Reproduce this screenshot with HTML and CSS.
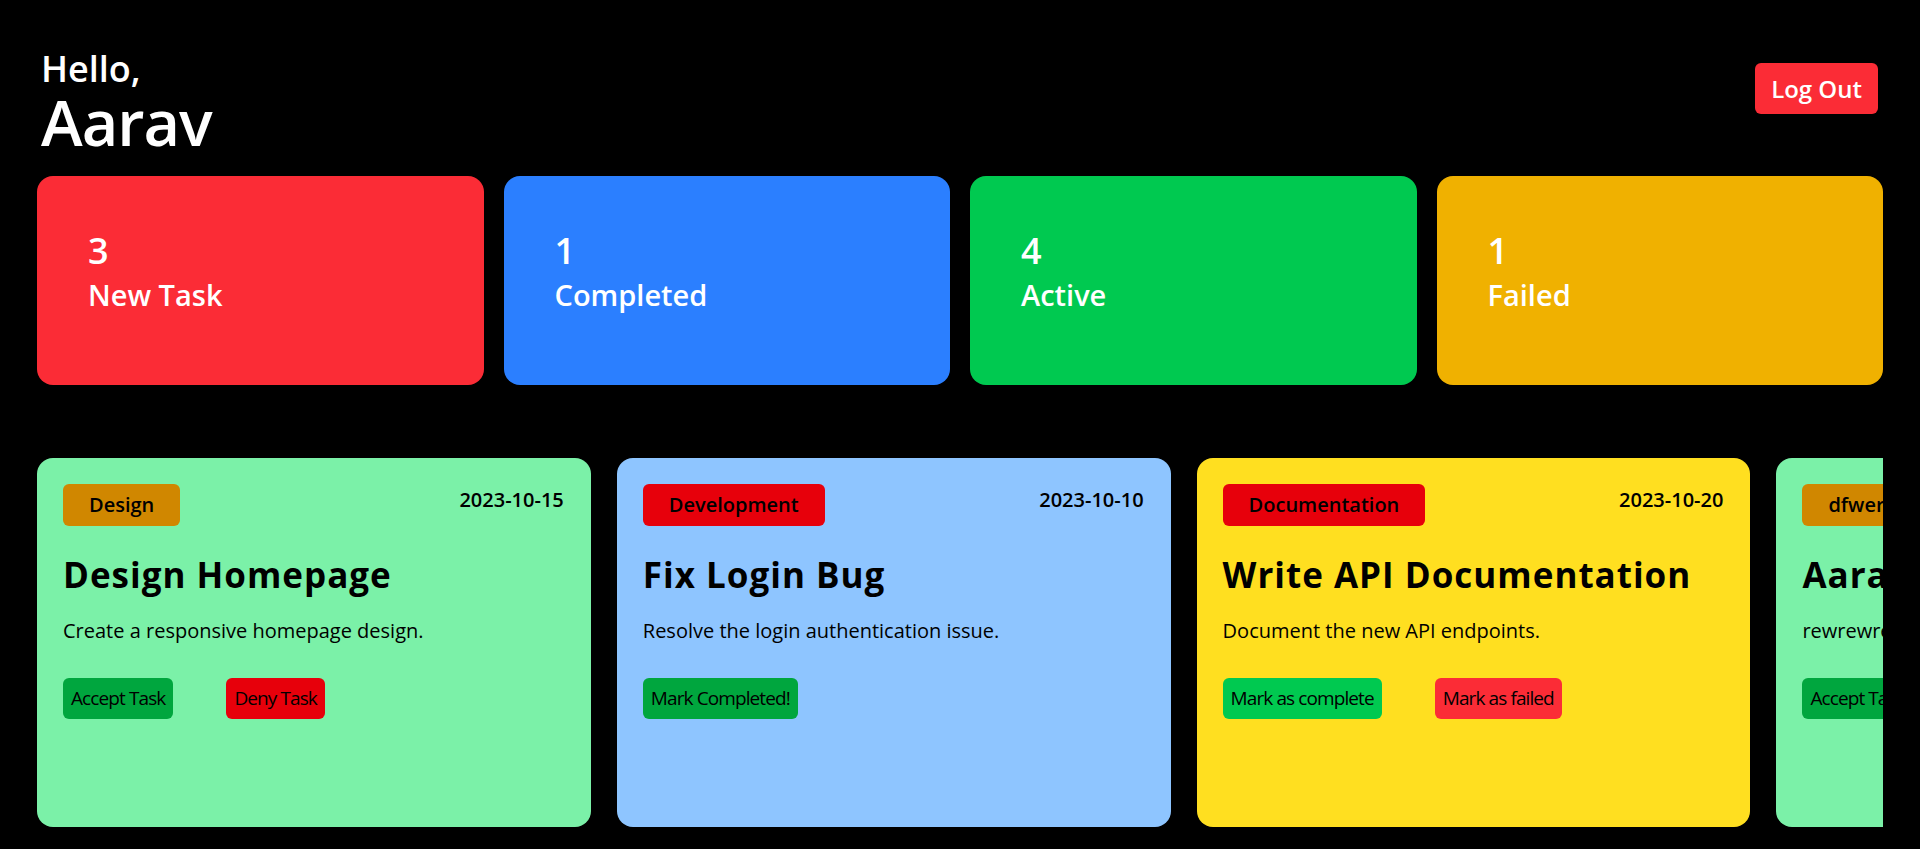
FILE: index.html
```html
<!DOCTYPE html>
<html lang="en">
<head>
<meta charset="utf-8">
<title>Employee Dashboard</title>
<link rel="stylesheet" href="styles.css">
</head>
<body>
<div class="page">
  <header class="top">
    <h1 class="greet"><span class="hello">Hello,</span><span class="name">Aarav</span></h1>
    <button class="logout">Log Out</button>
  </header>

  <section class="stats">
    <div class="stat stat-new">
      <div class="stat-num">3</div>
      <div class="stat-label">New Task</div>
    </div>
    <div class="stat stat-completed">
      <div class="stat-num">1</div>
      <div class="stat-label">Completed</div>
    </div>
    <div class="stat stat-active">
      <div class="stat-num">4</div>
      <div class="stat-label">Active</div>
    </div>
    <div class="stat stat-failed">
      <div class="stat-num">1</div>
      <div class="stat-label">Failed</div>
    </div>
  </section>

  <section class="tasklist">
    <article class="task task-new">
      <div class="task-head">
        <span class="badge badge-amber">Design</span>
        <span class="date">2023-10-15</span>
      </div>
      <h2 class="title">Design Homepage</h2>
      <p class="desc">Create a responsive homepage design.</p>
      <div class="actions">
        <button class="btn btn-green-dark">Accept Task</button>
        <button class="btn btn-red-dark">Deny Task</button>
      </div>
    </article>

    <article class="task task-done">
      <div class="task-head">
        <span class="badge badge-red">Development</span>
        <span class="date">2023-10-10</span>
      </div>
      <h2 class="title">Fix Login Bug</h2>
      <p class="desc">Resolve the login authentication issue.</p>
      <div class="actions">
        <button class="btn btn-green-dark">Mark Completed!</button>
      </div>
    </article>

    <article class="task task-active">
      <div class="task-head">
        <span class="badge badge-red">Documentation</span>
        <span class="date">2023-10-20</span>
      </div>
      <h2 class="title">Write API Documentation</h2>
      <p class="desc">Document the new API endpoints.</p>
      <div class="actions">
        <button class="btn btn-green">Mark as complete</button>
        <button class="btn btn-red">Mark as failed</button>
      </div>
    </article>

    <article class="task task-new">
      <div class="task-head">
        <span class="badge badge-amber">dfwerwer</span>
        <span class="date">2023-11-02</span>
      </div>
      <h2 class="title">Aarav Task</h2>
      <p class="desc">rewrewrewrewr</p>
      <div class="actions">
        <button class="btn btn-green-dark">Accept Task</button>
        <button class="btn btn-red-dark">Deny Task</button>
      </div>
    </article>
  </section>
</div>
</body>
</html>
```

FILE: styles.css
```css
html, body {
  margin: 0;
  background: #000;
}

body {
  font-family: "Open Sans", "Noto Sans", sans-serif;
  color: #fff;
}

.page {
  box-sizing: border-box;
  height: 849px;
  padding: 45px 37px 0;
  overflow: hidden;
}

/* header */
.top {
  display: flex;
  justify-content: space-between;
  align-items: flex-start;
}

.greet {
  margin: 0 0 0 4px;
  display: flex;
  flex-direction: column;
  font-weight: 600;
  color: #fff;
}

.hello {
  font-size: 36px;
  line-height: 48px;
}

.name {
  font-size: 63px;
  line-height: 58px;
  letter-spacing: -1px;
}

.logout {
  margin: 18px 5px 0 0;
  padding: 10px 16px;
  border: 0;
  border-radius: 6px;
  background: #fb2c36;
  color: #fff;
  font-family: "Open Sans", sans-serif;
  font-size: 24px;
  line-height: 31px;
  font-weight: 600;
}

/* stats */
.stats {
  display: grid;
  grid-template-columns: repeat(4, 1fr);
  gap: 20px;
  margin-top: 25px;
}

.stat {
  box-sizing: border-box;
  height: 209px;
  padding: 55px 51px 0;
  border-radius: 16px;
  color: #fff;
}

.stat-new { background: #fb2c36; }
.stat-completed { background: #2b7fff; }
.stat-active { background: #00c950; }
.stat-failed { background: #f0b100; }

.stat-num {
  font-size: 36px;
  line-height: 40px;
  font-weight: 600;
}

.stat-label {
  margin-top: 6px;
  font-size: 29px;
  line-height: 36px;
  font-weight: 600;
}

/* task list */
.tasklist {
  display: flex;
  gap: 26px;
  margin-top: 73px;
  height: 369px;
  overflow: hidden;
}

.task {
  flex: 0 0 30%;
  box-sizing: border-box;
  padding: 26px 27px 26px 26px;
  border-radius: 16px;
  color: #000;
  overflow: hidden;
}

.task-new { background: #7bf1a8; }
.task-done { background: #8ec5ff; }
.task-active { background: #ffdf20; }

.task-head {
  display: flex;
  justify-content: space-between;
  align-items: flex-start;
}

.badge {
  padding: 0 26px;
  border-radius: 6px;
  font-size: 20px;
  line-height: 42px;
  font-weight: 600;
  white-space: nowrap;
}

.badge-amber { background: #d08700; }
.badge-red { background: #e7000b; }

.date {
  font-size: 20px;
  line-height: 32px;
  font-weight: 600;
}

.title {
  margin: 27px 0 0;
  font-size: 35px;
  line-height: 44px;
  font-weight: 700;
  letter-spacing: 1px;
  white-space: nowrap;
}

.desc {
  margin: 20px 0 0;
  font-size: 20px;
  line-height: 28px;
  white-space: nowrap;
}

.actions {
  display: flex;
  gap: 53px;
  margin-top: 33px;
}

.btn {
  padding: 0 8px;
  border: 0;
  border-radius: 6px;
  color: #000;
  font-family: "Open Sans", sans-serif;
  font-size: 19px;
  line-height: 41px;
  font-weight: 400;
  letter-spacing: -0.9px;
  white-space: nowrap;
}

.btn-green-dark { background: #00a63e; }
.btn-red-dark { background: #e7000b; }
.btn-green { background: #00c950; }
.btn-red { background: #fb2c36; }
```
